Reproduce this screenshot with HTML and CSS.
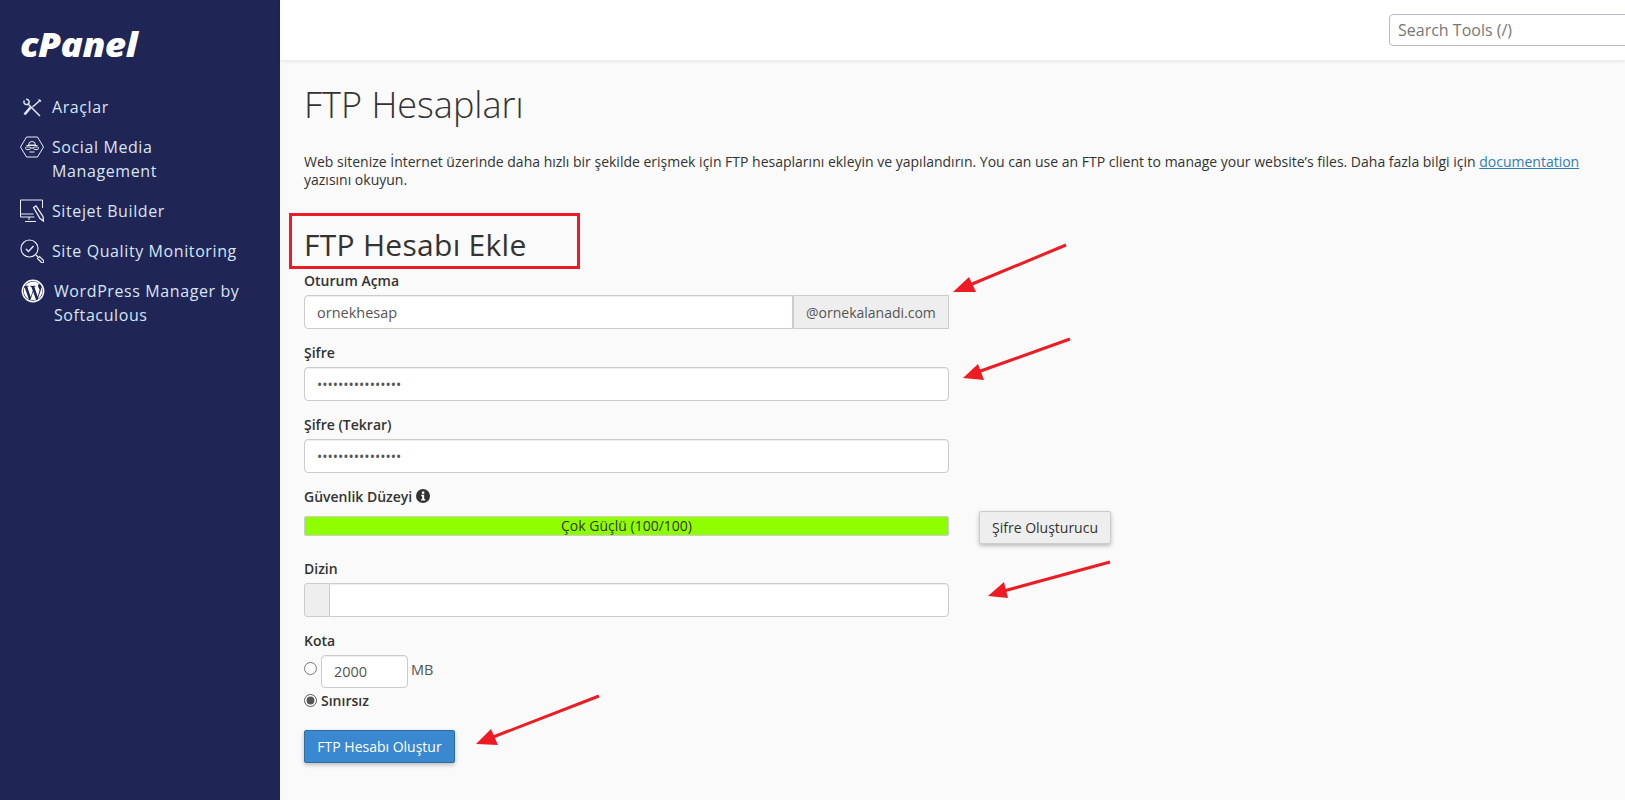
FILE: index.html
```html
<!DOCTYPE html>
<html lang="tr">
<head>
<meta charset="utf-8">
<title>FTP Hesapları</title>
<link rel="stylesheet" href="styles.css">
</head>
<body>
<div class="page">
  <aside class="sidebar">
    <div class="logo">cPanel</div>
    <nav class="nav">
      <a class="nav-item nav-tools">
        <svg class="nav-icon" viewBox="0 0 24 24" fill="none" stroke="#dfe8f6" stroke-width="1.500"><path d="M8.500 9.500 20 21"/><path d="M4.500 5.500c-1.200 1.500-.5 3.600 1.500 4 .9.200 1.800 0 2.500-.6.600-.7.800-1.600.6-2.500-.4-1.500-1.700-2.300-3-2.100"/><path d="M20.500 5 12.500 12"/><path d="M18.500 4.500l2.500 2"/><path d="M10.500 12.500 4.500 19.500" stroke-width="2.600"/></svg>
        <span>Araçlar</span>
      </a>
      <a class="nav-item nav-social">
        <svg class="nav-icon" viewBox="0 0 24 24" fill="none" stroke="#e8eef8" stroke-width="1"><path d="M6.500 2h11L23.500 12l-6 10h-11L.5 12z"/><path d="M8.500 10a3.500 3.500 0 0 1 7 0zM6.500 10.500h11"/><rect x="5.500" y="12" width="5" height="2.500" rx="1.200"/><rect x="13.500" y="12" width="5" height="2.500" rx="1.200"/><path d="M10.500 13h3M9.500 17h5"/></svg>
        <span>Social Media<br>Management</span>
      </a>
      <a class="nav-item nav-sitejet">
        <svg class="nav-icon" viewBox="0 0 24 24" fill="none" stroke="#e8eef8" stroke-width="1"><path d="M22.500 9V1H.5v17h14"/><path d="M.5 15h13M9 18v3M5 22.500h11"/><path d="M13.500 8.500l2.500-1.500 7 10.500.5 4.500-3.500-2.500z" stroke-width="1.300"/></svg>
        <span>Sitejet Builder</span>
      </a>
      <a class="nav-item nav-quality">
        <svg class="nav-icon" viewBox="0 0 24 24" fill="none" stroke="#e8eef8" stroke-width="1.200"><circle cx="9.500" cy="9.500" r="8.500"/><path d="M6 10l2.500 2.500L13.500 7" stroke-width="1.400"/><path d="M16 16l2 2"/><path d="M17.500 19.500l2-2 4 4a1.400 1.400 0 0 1-2 2z"/></svg>
        <span>Site Quality Monitoring</span>
      </a>
      <a class="nav-item nav-wp">
        <svg class="nav-icon" viewBox="0 0 24 24"><circle cx="12" cy="12" r="11.400" fill="#fff"/><circle cx="12" cy="12" r="9.900" fill="#1f2555"/><path fill="#fff" d="M2.800 12c0 3.700 2.100 6.900 5.200 8.400L3.600 8.300A9 9 0 0 0 2.800 12zm15.800-.5c0-1.200-.4-2-.8-2.600-.5-.8-.9-1.400-.9-2.100 0-.8.600-1.600 1.500-1.600h.1A9.200 9.200 0 0 0 4.300 6.900h.6c1 0 2.400-.1 2.400-.1.500 0 .6.700.1.800 0 0-.5.100-1.100.1l3.400 10.200 2.100-6.200-1.500-4c-.5 0-1-.1-1-.1-.5 0-.4-.8.100-.8 0 0 1.600.1 2.500.1 1 0 2.400-.1 2.400-.1.500 0 .6.700.1.800 0 0-.5.100-1.100.1l3.400 10.100.9-3.100c.4-1.300.7-2.200.7-3zM12.200 12.800l-2.800 8.100a9.200 9.200 0 0 0 5.700-.1l-.1-.1zm8-5.200.1.900c0 .9-.2 2-.7 3.300l-2.800 8.100a9.200 9.200 0 0 0 3.400-12.300z"/></svg>
        <span>WordPress Manager by<br>Softaculous</span>
      </a>
    </nav>
  </aside>
  <div class="main">
    <header class="topbar">
      <input class="search" type="text" placeholder="Search Tools (/)">
    </header>
    <main class="content">
      <h1 class="title">FTP Hesapları</h1>
      <p class="intro">Web sitenize İnternet üzerinde daha hızlı bir şekilde erişmek için FTP hesaplarını ekleyin ve yapılandırın. You can use an FTP client to manage your website’s files. Daha fazla bilgi için <a class="doc-link">documentation</a> yazısını okuyun.</p>
      <h2 class="subtitle">FTP Hesabı Ekle</h2>
      <form class="form">
        <div class="group">
          <label class="label">Oturum Açma</label>
          <div class="input-row">
            <input class="field field-join field-text" type="text" value="ornekhesap">
            <span class="addon addon-right">@ornekalanadi.com</span>
          </div>
        </div>
        <div class="group">
          <label class="label">Şifre</label>
          <input class="field" type="password" value="aaaaaaaaaaaaaaaa">
        </div>
        <div class="group">
          <label class="label">Şifre (Tekrar)</label>
          <input class="field" type="password" value="aaaaaaaaaaaaaaaa">
        </div>
        <div class="group group-strength">
          <label class="label label-tight">Güvenlik Düzeyi
            <svg class="info" viewBox="0 0 14 14"><circle cx="7" cy="7" r="7" fill="#333"/><rect x="5.900" y="2.500" width="2.400" height="2.300" fill="#fff"/><path d="M5.200 5.800h3v4.200h1v1.500H5.200V10h1V7.300h-1z" fill="#fff"/></svg>
          </label>
          <div class="strength-row">
            <div class="bar">Çok Güçlü (100/100)</div>
            <button class="btn-gen" type="button">Şifre Oluşturucu</button>
          </div>
        </div>
        <div class="group">
          <label class="label">Dizin</label>
          <div class="input-row">
            <span class="addon addon-left"></span>
            <input class="field field-join-left" type="text">
          </div>
        </div>
        <div class="group group-quota">
          <label class="label">Kota</label>
          <div class="quota-row">
            <input class="radio" type="radio" name="q">
            <input class="field field-quota field-text" type="text" value="2000">
            <span class="unit">MB</span>
          </div>
          <div class="unlimited-row">
            <input class="radio" type="radio" name="q" checked>
            <span class="unlimited">Sınırsız</span>
          </div>
        </div>
        <button class="btn-primary" type="button">FTP Hesabı Oluştur</button>
      </form>
    </main>
  </div>
  <svg class="annotations" viewBox="0 0 1625 800" fill="none">
    <rect x="290.500" y="214.500" width="288" height="53" stroke="#ed1c24" stroke-width="3"/>
    <g stroke="#ed1c24" stroke-width="3" fill="#ed1c24">
      <path d="M1066 245 965 287"/><path stroke="none" d="M953 292l16-15 7 15z"/>
      <path d="M1070 339 975 373"/><path stroke="none" d="M963 378l15-14 6 16z"/>
      <path d="M1110 562 1000 592"/><path stroke="none" d="M988 596l16-14 4 16z"/>
      <path d="M599 696 488 739"/><path stroke="none" d="M476 744l15-15 7 16z"/>
    </g>
  </svg>
</div>
</body>
</html>
```

FILE: styles.css
```css
* { box-sizing: border-box; }
html, body { margin: 0; height: 100%; overflow: hidden; }
body { font-family: "Open Sans", sans-serif; font-size: 14px; color: #333; background: #fafafa; }
.page { position: relative; display: flex; width: 100%; height: 800px; overflow: hidden; }

.sidebar { flex: 0 0 280px; background: #1f2555; color: #d9e4f5; }
.logo { margin: 25px 0 0 20px; height: 40px; font-family: "Open Sans", sans-serif; font-style: italic; font-weight: 800; font-size: 33px; line-height: 40px; color: #fff; letter-spacing: -0.5px; transform: scaleX(1.12); transform-origin: left center; }
.nav { display: flex; flex-direction: column; margin-top: 30px; }
.nav-item { display: flex; align-items: flex-start; padding-left: 20px; font-size: 16px; line-height: 24px; letter-spacing: 0.6px; }
.nav-icon { flex: none; width: 24px; height: 24px; margin-right: 8px; }
.nav-social { margin-top: 16px; }
.nav-sitejet { margin-top: 16px; }
.nav-quality { margin-top: 16px; }
.nav-wp { margin-top: 16px; }
.nav-wp .nav-icon { margin-left: 1px; margin-right: 9px; }

.main { flex: 1; min-width: 0; display: flex; flex-direction: column; }
.topbar { height: 60px; flex: none; display: flex; justify-content: flex-end; align-items: flex-start; padding-top: 14px; background: #fff; box-shadow: 0 1px 4px rgba(0,0,0,.1); overflow: hidden; }
.search { width: 256px; height: 32px; margin-right: -20px; padding: 0 8px; border: 1px solid #b9b7c9; border-radius: 4px; font: 16px "Open Sans", sans-serif; color: #555; background: #fff; }
.search::placeholder { color: #777; opacity: 1; }

.content { padding: 0 25px 0 24px; }
.title { margin: 23px 0 0; font-size: 36px; font-weight: 300; line-height: 44px; color: #333; }
.intro { margin: 26px 0 0; font-size: 14px; line-height: 18px; color: #333; }
.doc-link { color: #337ab7; text-decoration: underline; }
.subtitle { margin: 36px 0 0; font-size: 30px; font-weight: 500; line-height: 40px; letter-spacing: 0.28px; color: #333; }

.form { width: 645px; margin-top: 6px; }
.group { margin-bottom: 14px; }
.label { display: block; height: 20px; margin-bottom: 4px; font-size: 14px; font-weight: 600; line-height: 20px; }
.label-tight { margin-bottom: 4px; }
.info { width: 14px; height: 14px; vertical-align: -1px; }
.input-row { display: flex; }
.field { display: block; width: 100%; height: 34px; padding: 6px 12px; border: 1px solid #ccc; border-radius: 4px; font: 14px "Open Sans", sans-serif; color: #555; background: #fff; box-shadow: inset 0 1px 1px rgba(0,0,0,.075); }
.field-text { font-size: 14.5px; }
.field-join { flex: 1; border-radius: 4px 0 0 4px; }
.field-join-left { flex: 1; border-radius: 0 4px 4px 0; }
.addon { display: flex; align-items: center; height: 34px; border: 1px solid #ccc; background: #eee; color: #555; font-size: 14px; }
.addon-right { flex: 0 0 156px; padding: 0 12px; border-left-width: 1px; }
.addon-left { flex: 0 0 25px; border-right: 0; border-radius: 4px 0 0 4px; }

.group-strength { margin-bottom: 15px; }
.strength-row { display: flex; align-items: flex-start; width: 807px; height: 33px; }
.bar { flex: 0 0 645px; height: 20px; margin-top: 5px; border: 1px solid #ccc; border-radius: 2px; background: #8fff00; font-size: 14px; line-height: 18px; text-align: center; color: #333; }
.btn-gen { flex: none; height: 33px; margin-left: 30px; padding: 0 12px; border: 1px solid #ccc; border-radius: 2px; background: #eee; font: 14px "Open Sans", sans-serif; color: #333; box-shadow: 0 2px 4px rgba(0,0,0,.25); }

.group-quota { margin-bottom: 18px; }
.quota-row { display: flex; align-items: flex-start; height: 33px; }
.radio { flex: none; width: 13px; height: 13px; margin: 7px 4px 0 0; accent-color: #555; }
.field-quota { width: 87px; height: 33px; padding: 6px 12px; }
.unit { margin-left: 3px; font-size: 14.5px; line-height: 30px; color: #555; }
.unlimited-row { display: flex; align-items: center; height: 24px; }
.unlimited-row .radio { margin-top: 0; }
.unlimited { font-weight: 600; color: #333; }

.btn-primary { display: block; width: 151px; height: 33px; padding: 0; border: 1px solid #2e6da4; border-radius: 2px; background: #3a88d0; color: #fff; font: 14px "Open Sans", sans-serif; box-shadow: 0 2px 4px rgba(0,0,0,.25); }

.annotations { position: absolute; left: 0; top: 0; width: 1625px; height: 800px; pointer-events: none; }
```
